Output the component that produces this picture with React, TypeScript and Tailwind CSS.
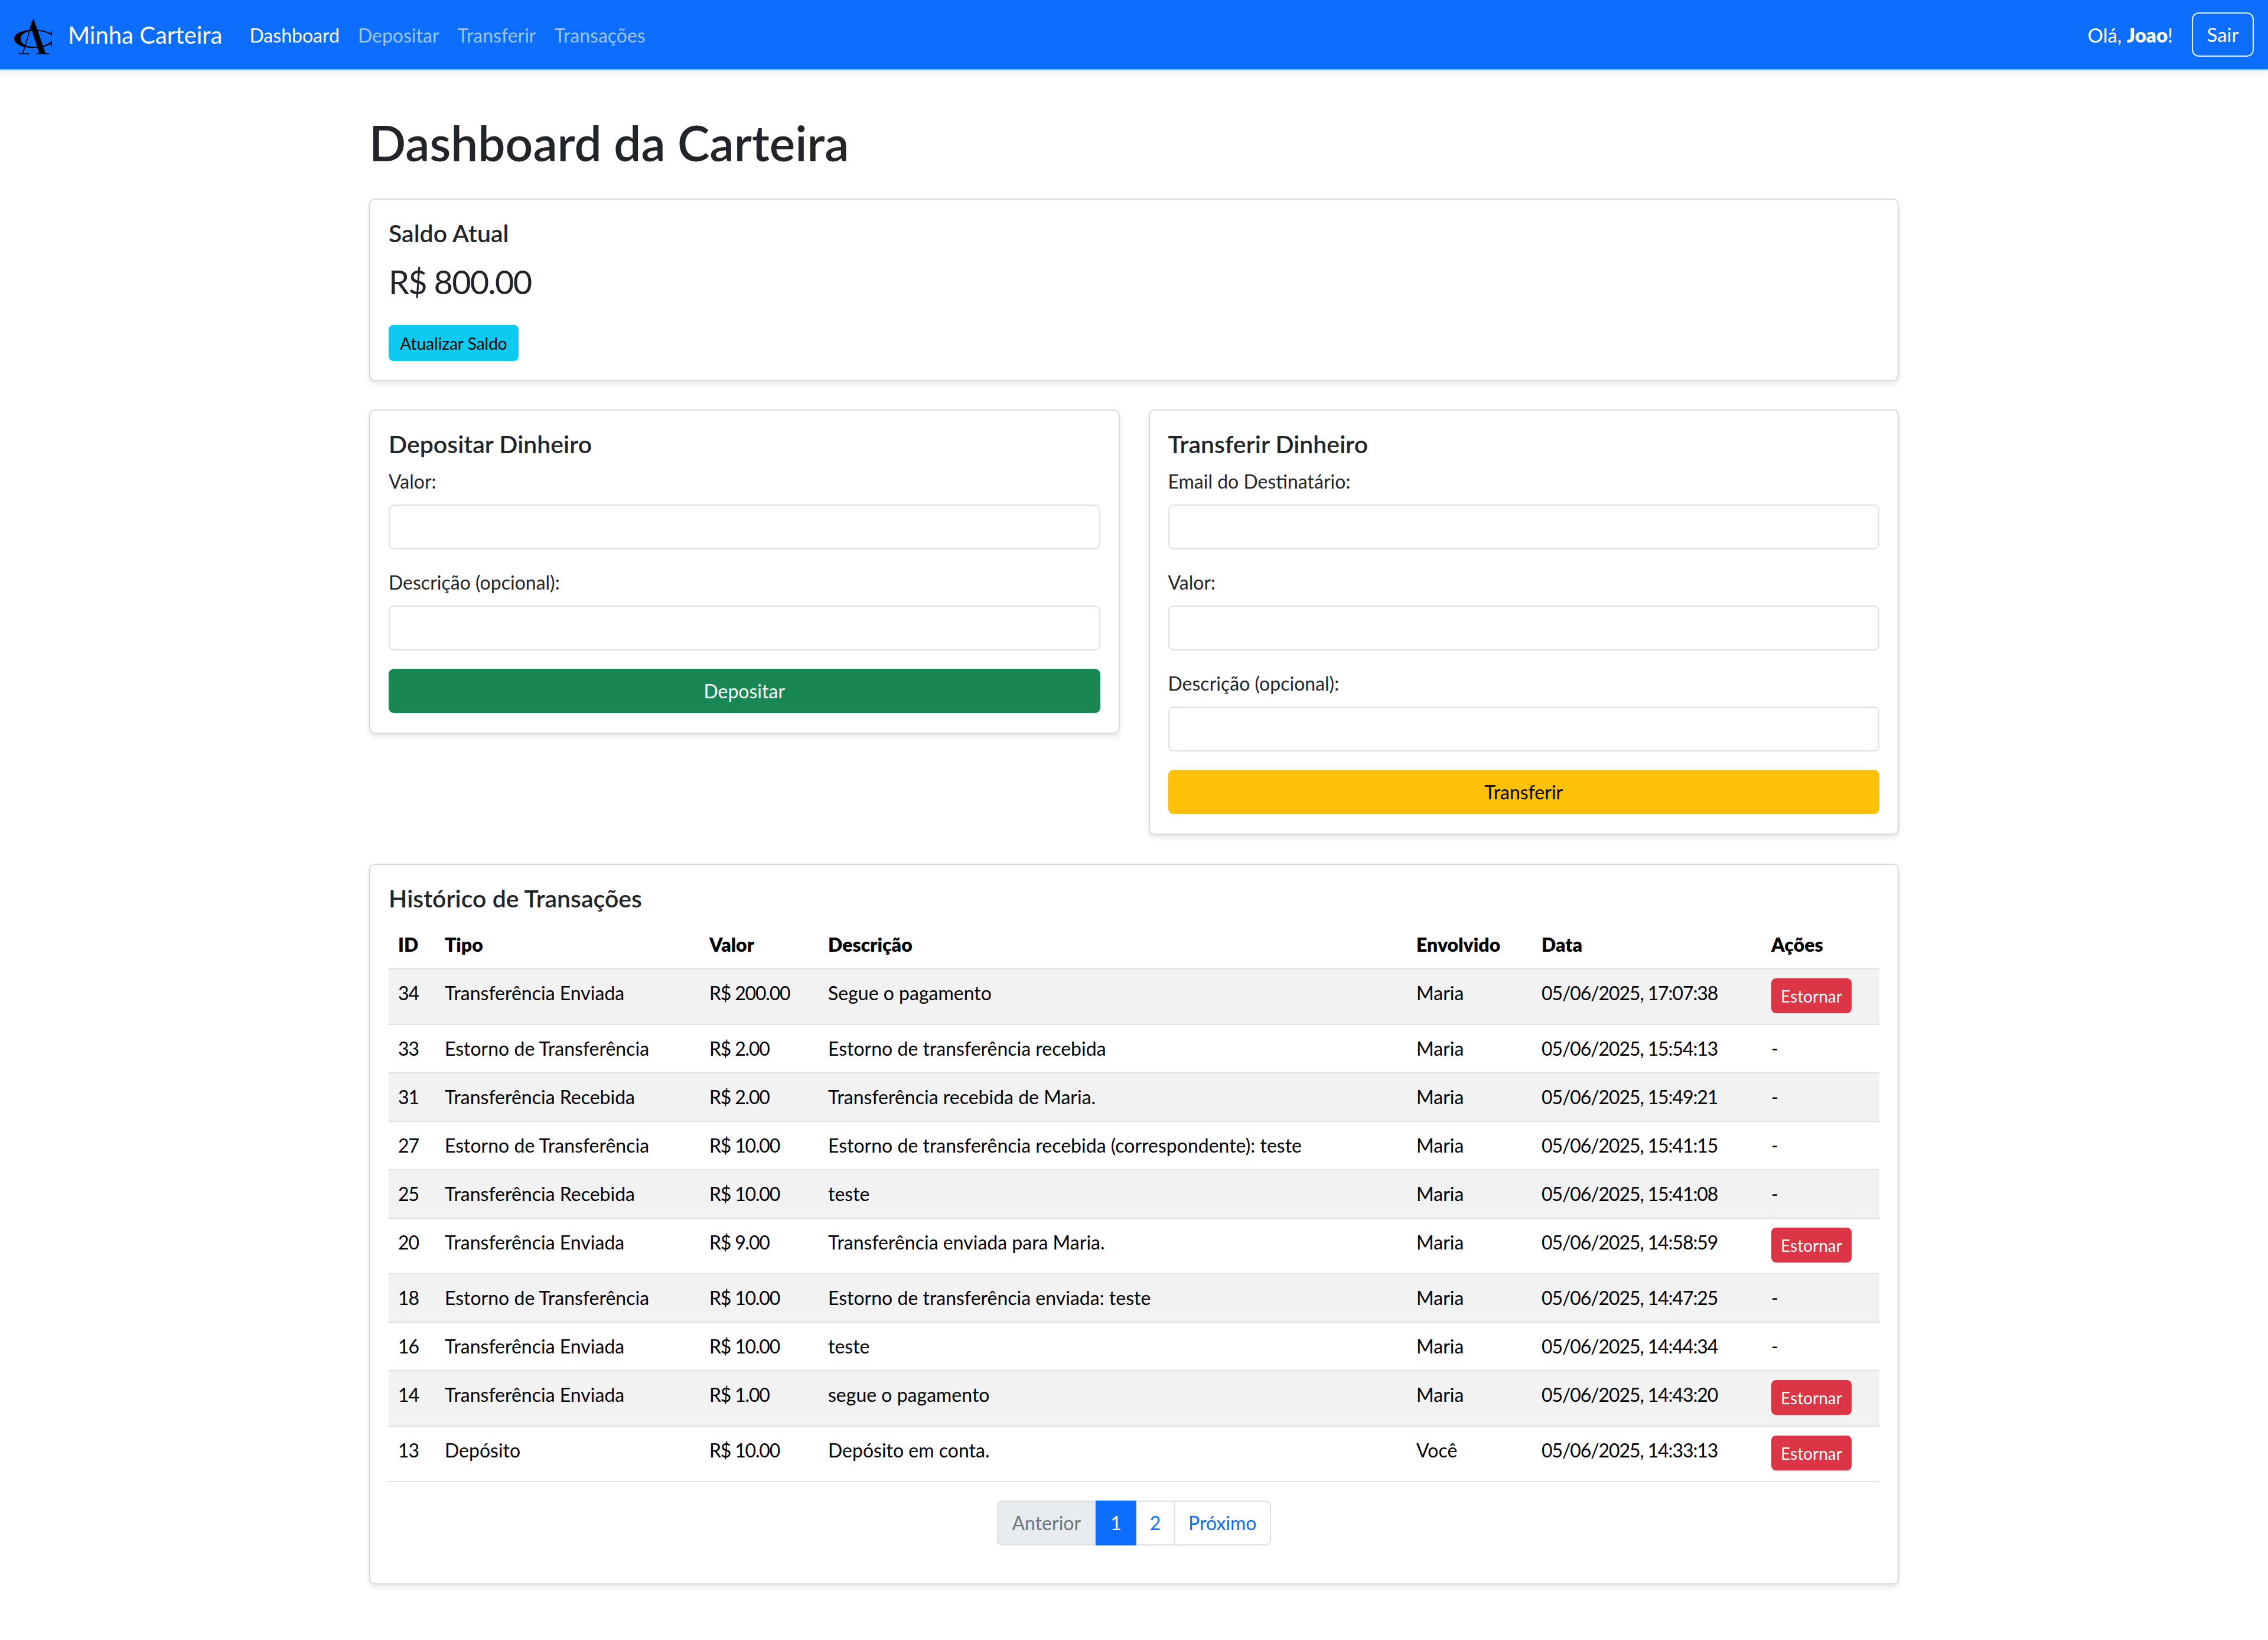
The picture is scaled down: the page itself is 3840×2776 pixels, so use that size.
import React from 'react';

const rows = [
  { id: 34, tipo: 'Transferência Enviada', valor: 'R$ 200.00', desc: 'Segue o pagamento', env: 'Maria', data: '05/06/2025, 17:07:38', estorno: true },
  { id: 33, tipo: 'Estorno de Transferência', valor: 'R$ 2.00', desc: 'Estorno de transferência recebida', env: 'Maria', data: '05/06/2025, 15:54:13', estorno: false },
  { id: 31, tipo: 'Transferência Recebida', valor: 'R$ 2.00', desc: 'Transferência recebida de Maria.', env: 'Maria', data: '05/06/2025, 15:49:21', estorno: false },
  { id: 27, tipo: 'Estorno de Transferência', valor: 'R$ 10.00', desc: 'Estorno de transferência recebida (correspondente): teste', env: 'Maria', data: '05/06/2025, 15:41:15', estorno: false },
  { id: 25, tipo: 'Transferência Recebida', valor: 'R$ 10.00', desc: 'teste', env: 'Maria', data: '05/06/2025, 15:41:08', estorno: false },
  { id: 20, tipo: 'Transferência Enviada', valor: 'R$ 9.00', desc: 'Transferência enviada para Maria.', env: 'Maria', data: '05/06/2025, 14:58:59', estorno: true },
  { id: 18, tipo: 'Estorno de Transferência', valor: 'R$ 10.00', desc: 'Estorno de transferência enviada: teste', env: 'Maria', data: '05/06/2025, 14:47:25', estorno: false },
  { id: 16, tipo: 'Transferência Enviada', valor: 'R$ 10.00', desc: 'teste', env: 'Maria', data: '05/06/2025, 14:44:34', estorno: false },
  { id: 14, tipo: 'Transferência Enviada', valor: 'R$ 1.00', desc: 'segue o pagamento', env: 'Maria', data: '05/06/2025, 14:43:20', estorno: true },
  { id: 13, tipo: 'Depósito', valor: 'R$ 10.00', desc: 'Depósito em conta.', env: 'Você', data: '05/06/2025, 14:33:13', estorno: true },
];

const headers = ['ID', 'Tipo', 'Valor', 'Descrição', 'Envolvido', 'Data', 'Ações'];

function Logo() {
  return (
    <svg viewBox="0 0 360 360" className="w-[120px] h-[120px] shrink-0 -mr-[5px]">
      <path
        d="M264 156 L264 186 C250 170 215 160 170 160 C130 160 105 178 105 200 C105 222 130 240 170 240 C215 240 250 230 264 208 L264 243 L258 226 C235 240 205 246 170 246 C115 246 72 228 72 200 C72 172 115 154 170 154 C205 154 235 160 258 172 Z"
        fill="#000"
      />
      <path d="M170 97 L232 275 L200 275 L155 138 Z" fill="#000" />
      <path d="M165 112 L116 274" stroke="#000" strokeWidth="5" fill="none" />
      <path d="M94 276 L150 276 M185 276 L251 276" stroke="#000" strokeWidth="4" fill="none" />
    </svg>
  );
}

function Field({ label }: { label: string }) {
  return (
    <div className="mb-[31px]">
      <label className="block text-[32px] leading-[50px] mb-[14px] text-[#212529]">{label}</label>
      <div className="h-[76px] rounded-[9px] border-2 border-[#dee2e6] bg-white" />
    </div>
  );
}

function Card({ children, className = '' }: { children: React.ReactNode; className?: string }) {
  return (
    <div className={`rounded-[10px] border-2 border-[#d9dadb] bg-white px-[31px] pt-[30px] shadow-[0_5px_10px_rgba(0,0,0,0.1)] ${className}`}>
      {children}
    </div>
  );
}

function CardTitle({ children }: { children: React.ReactNode }) {
  return <h5 className="text-[41px] leading-[54px] font-semibold text-[#212529]">{children}</h5>;
}

export default function App() {
  return (
    <div className="min-h-[2776px] bg-white font-['Lato',sans-serif] text-[#212529]">
      <nav className="h-[119px] bg-[#0d6efd] border-b-2 border-[#86b7fe] shadow-[0_4px_10px_rgba(0,0,0,0.08)] flex items-center pr-[24px]">
        <Logo />
        <a className="text-[40px] text-white mr-[46px] whitespace-nowrap">Minha Carteira</a>
        <div className="flex items-center gap-[31px] text-[32px] mt-[3px]">
          <a className="text-white">Dashboard</a>
          <a className="text-[#9ec5fe]">Depositar</a>
          <a className="text-[#9ec5fe]">Transferir</a>
          <a className="text-[#9ec5fe]">Transações</a>
        </div>
        <div className="ml-auto flex items-center gap-[32px] text-[33px] text-white">
          <span className="mt-[2px]">Olá, <strong className="font-extrabold">Joao</strong>!</span>
          <button className="h-[75px] w-[105px] rounded-[12px] border-2 border-[#e7f1ff] text-[33px] text-white">Sair</button>
        </div>
      </nav>

      <main className="w-[2590px] mx-auto">
        <h1 className="mt-[67px] mb-[40px] text-[82px] leading-[110px] font-semibold text-[#212529]">Dashboard da Carteira</h1>

        <Card className="h-[309px] mb-[48px]">
          <CardTitle>Saldo Atual</CardTitle>
          <p className="mt-[15px] text-[56px] leading-[80px] tracking-[-1.8px] text-[#212529]">R$ 800.00</p>
          <button className="mt-[33px] h-[61px] w-[220px] rounded-[8px] bg-[#0dcaf0] text-[28px] text-black">Atualizar Saldo</button>
        </Card>

        <div className="grid grid-cols-2 gap-[49px] items-start mb-[49px]">
          <Card className="h-[549px]">
            <CardTitle>Depositar Dinheiro</CardTitle>
            <div className="mt-[11px]">
              <Field label="Valor:" />
              <Field label="Descrição (opcional):" />
            </div>
            <button className="w-full h-[75px] rounded-[9px] bg-[#198754] text-[32px] text-white">Depositar</button>
          </Card>
          <Card className="h-[720px]">
            <CardTitle>Transferir Dinheiro</CardTitle>
            <div className="mt-[11px]">
              <Field label="Email do Destinatário:" />
              <Field label="Valor:" />
              <Field label="Descrição (opcional):" />
            </div>
            <button className="w-full h-[75px] rounded-[9px] bg-[#ffc107] text-[32px] text-black">Transferir</button>
          </Card>
        </div>

        <Card className="h-[1220px]">
          <CardTitle>Histórico de Transações</CardTitle>
          <table className="w-full table-fixed border-collapse text-[32px] text-black mt-[11px]">
            <colgroup>
              <col className="w-[79px]" />
              <col className="w-[448px]" />
              <col className="w-[201px]" />
              <col className="w-[996px]" />
              <col className="w-[212px]" />
              <col className="w-[389px]" />
              <col className="w-[199px]" />
            </colgroup>
            <thead>
              <tr className="border-b-2 border-[#dee2e6]">
                {headers.map((h) => (
                  <th key={h} className="px-[16px] py-[13px] text-left font-extrabold leading-[54px]">{h}</th>
                ))}
              </tr>
            </thead>
            <tbody>
              {rows.map((r, i) => (
                <tr key={r.id} className={`border-b-2 border-[#dee2e6] ${i % 2 === 0 ? 'bg-[#f2f2f2]' : 'bg-white'}`}>
                  <td className="px-[16px] py-[13px] align-top leading-[54px] tracking-[-1px]">{r.id}</td>
                  <td className="px-[16px] py-[13px] align-top leading-[54px]">{r.tipo}</td>
                  <td className="px-[16px] py-[13px] align-top leading-[54px] tracking-[-1.2px]">{r.valor}</td>
                  <td className="px-[16px] py-[13px] align-top leading-[54px]">{r.desc}</td>
                  <td className="px-[16px] py-[13px] align-top leading-[54px]">{r.env}</td>
                  <td className="px-[16px] py-[13px] align-top leading-[54px] tracking-[-1.1px]">{r.data}</td>
                  <td className="px-[16px] py-[13px] align-top leading-[54px]">
                    {r.estorno ? (
                      <button className="block mt-[2px] mb-[5px] h-[59px] w-[136px] rounded-[8px] bg-[#dc3545] text-[28px] text-white">Estornar</button>
                    ) : (
                      '-'
                    )}
                  </td>
                </tr>
              ))}
            </tbody>
          </table>
          <div className="mt-[31px] flex justify-center">
            <div className="flex h-[76px] text-[32px]">
              <span className="flex items-center px-[23px] rounded-l-[9px] border-2 border-[#dee2e6] bg-[#e9ecef] text-[#6c757d]">Anterior</span>
              <span className="flex items-center justify-center w-[69px] bg-[#0d6efd] text-white">1</span>
              <span className="flex items-center justify-center w-[66px] border-y-2 border-r-2 border-[#dee2e6] text-[#0d6efd]">2</span>
              <span className="flex items-center px-[22px] rounded-r-[9px] border-y-2 border-r-2 border-[#dee2e6] text-[#0d6efd]">Próximo</span>
            </div>
          </div>
        </Card>
      </main>
    </div>
  );
}
